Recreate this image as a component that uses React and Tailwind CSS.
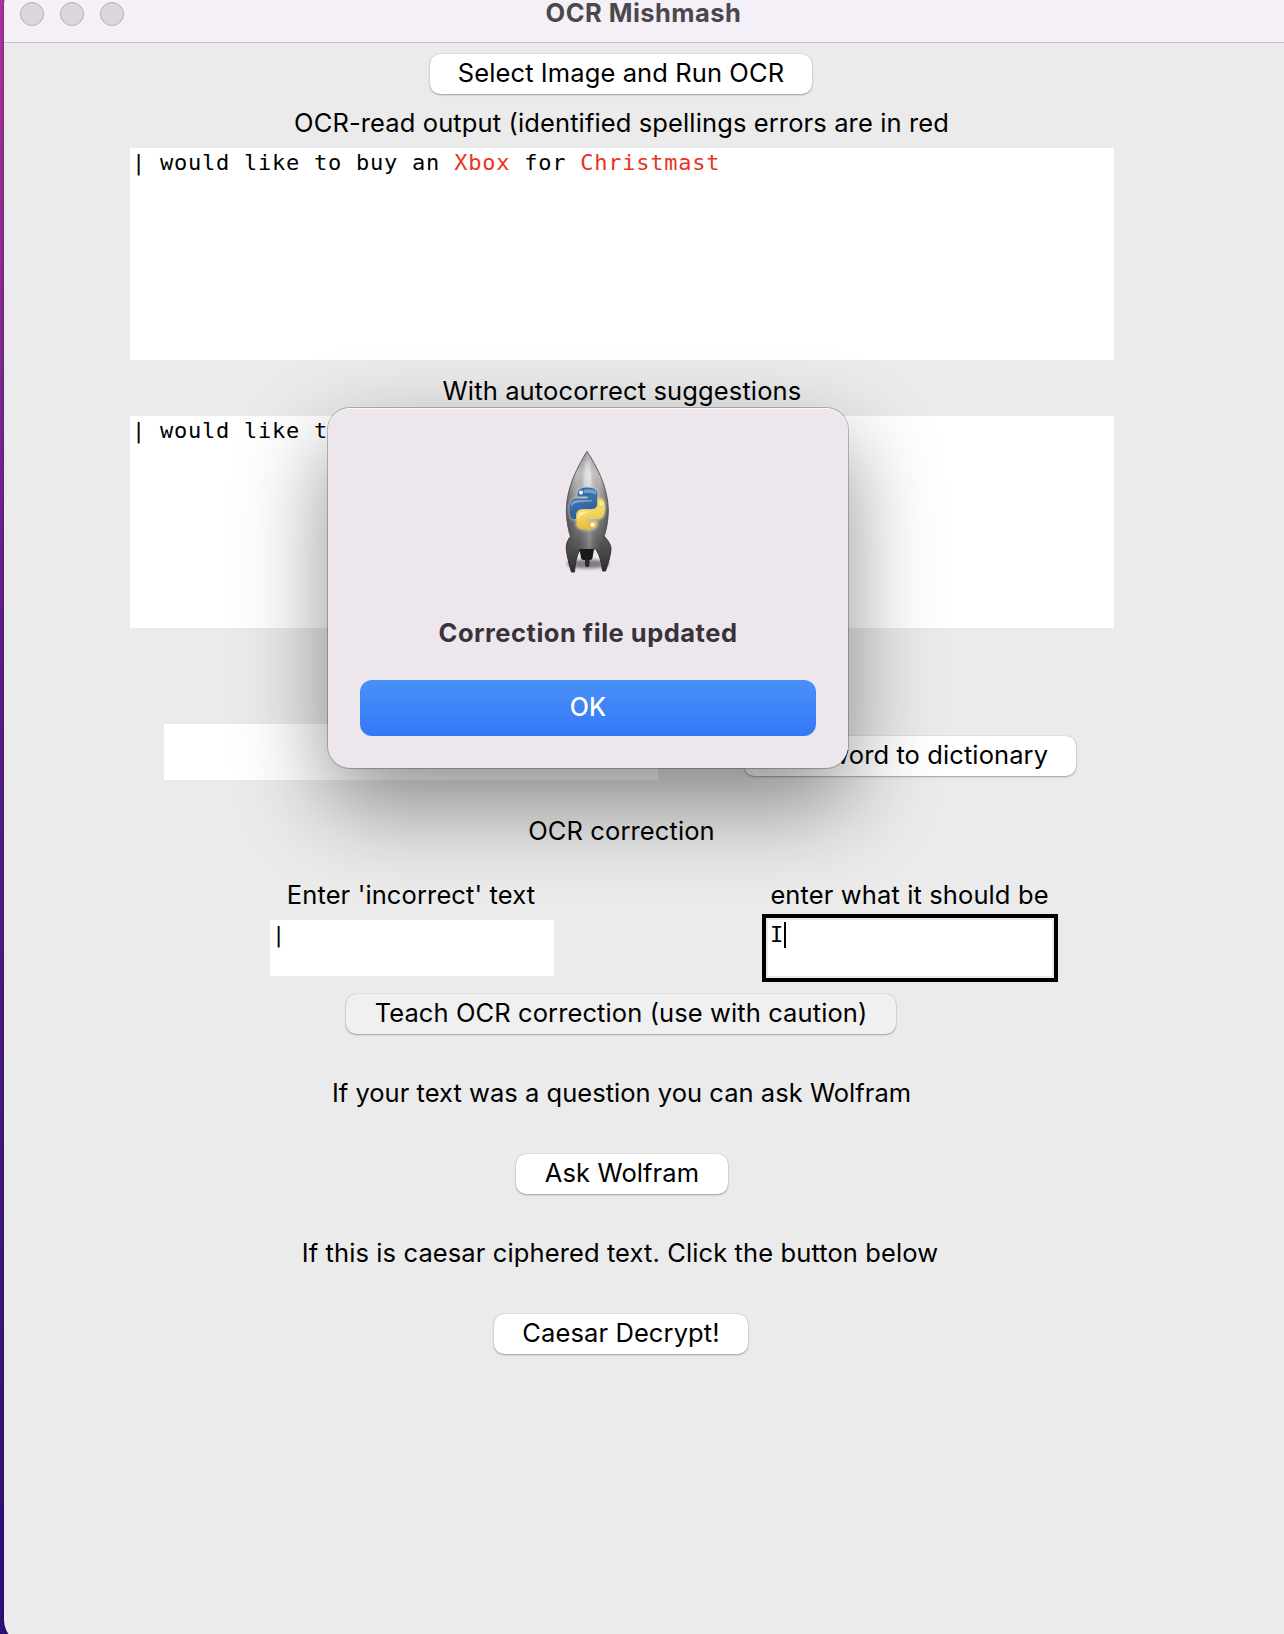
function Label({ children, className = "" }) {
  return (
    <p className={"whitespace-nowrap text-center text-[25.5px] leading-8 text-black " + className}>
      {children}
    </p>
  );
}

function PushButton({ children, className = "bg-white" }) {
  return (
    <button
      type="button"
      className={
        "flex h-10 shrink-0 items-center justify-center whitespace-nowrap rounded-[10px] pb-[2px] text-[25.5px] leading-8 tracking-[0.1px] text-black shadow-[0_0_1px_rgba(0,0,0,0.3),0_1px_2px_rgba(0,0,0,0.3)] " +
        className
      }
    >
      {children}
    </button>
  );
}

function TextBox({ children, className = "" }) {
  return (
    <div
      className={
        "whitespace-pre bg-white pl-[2px] pt-[1px] font-['DejaVu_Sans_Mono',monospace] text-[22px] leading-7 tracking-[0.76px] text-black " +
        className
      }
    >
      {children}
    </div>
  );
}

function TrafficLights() {
  return (
    <div className="absolute left-[16px] top-[2px] flex gap-4">
      {[0, 1, 2].map((i) => (
        <span key={i} className="size-6 rounded-full border border-[#b7b1b9] bg-[#dbd5dd]" />
      ))}
    </div>
  );
}

function RocketIcon() {
  return (
    <svg width="100" height="160" viewBox="0 0 100 160" aria-hidden="true">
      <defs>
        <linearGradient id="hull" x1="0" y1="0" x2="0" y2="1">
          <stop offset="0" stopColor="#8e8e8e" />
          <stop offset="0.22" stopColor="#c6c6c6" />
          <stop offset="0.42" stopColor="#acacac" />
          <stop offset="0.7" stopColor="#7c7c7c" />
          <stop offset="1" stopColor="#505050" />
        </linearGradient>
        <linearGradient id="hullSides" x1="0" y1="0" x2="1" y2="0">
          <stop offset="0" stopColor="#222" stopOpacity="0.5" />
          <stop offset="0.25" stopColor="#555" stopOpacity="0.08" />
          <stop offset="0.55" stopColor="#fff" stopOpacity="0.28" />
          <stop offset="0.8" stopColor="#555" stopOpacity="0.08" />
          <stop offset="1" stopColor="#222" stopOpacity="0.5" />
        </linearGradient>
        <linearGradient id="blueSnake" x1="0" y1="0" x2="0.3" y2="1">
          <stop offset="0" stopColor="#2f6dab" />
          <stop offset="0.5" stopColor="#3a70a8" />
          <stop offset="1" stopColor="#2b5d95" />
        </linearGradient>
        <linearGradient id="yellowSnake" x1="0" y1="0" x2="0.2" y2="1">
          <stop offset="0" stopColor="#f3d14e" />
          <stop offset="0.5" stopColor="#f5d862" />
          <stop offset="1" stopColor="#e8bd3c" />
        </linearGradient>
        <linearGradient id="fin" x1="0" y1="0" x2="0" y2="1">
          <stop offset="0" stopColor="#5a5a5a" />
          <stop offset="0.5" stopColor="#474747" />
          <stop offset="1" stopColor="#2c2c2c" />
        </linearGradient>
        <filter id="soft" x="-30%" y="-100%" width="160%" height="300%">
          <feGaussianBlur stdDeviation="1.7" />
        </filter>
        <filter id="glow" x="-20%" y="-20%" width="140%" height="140%">
          <feGaussianBlur stdDeviation="1" />
        </filter>
      </defs>
      <ellipse cx="48" cy="134" rx="21" ry="4.5" fill="#4a454a" opacity="0.65" filter="url(#soft)" />
      <path d="M31 106C27.500 110 26 114.500 26.300 118.500C27 126 29 134 31.500 142H34.500C35 134 36.500 125.500 40 119.500Z" fill="url(#fin)" stroke="#2d2d2d" strokeWidth="1" />
      <path d="M64 106C67.500 110 71 114.500 71 118.500C70.500 126 68 134 65.500 141H62.500C61.500 133 60 125 56 119.500Z" fill="url(#fin)" stroke="#2d2d2d" strokeWidth="1" />
      <path d="M47 21.300C38 36 26.500 57 26.300 80C26.400 95 30 108 35 118.500Q47 121 59 118.500C64.500 108 68.300 95 68.300 80C68 57 56.500 36 47 21.300Z" fill="url(#hull)" />
      <path d="M47 21.300C38 36 26.500 57 26.300 80C26.400 95 30 108 35 118.500Q47 121 59 118.500C64.500 108 68.300 95 68.300 80C68 57 56.500 36 47 21.300Z" fill="url(#hullSides)" stroke="#555" strokeWidth="0.9" />
      <path d="M47 29C44 37 43 47 43.500 57H51.500C52 47 50 37 47 29Z" fill="#fff" opacity="0.4" filter="url(#glow)" />
      <path d="M39.500 119H54L52.500 128Q52 130 50 130H43.500Q41.500 130 41 128Z" fill="#191919" />
      <path d="M45 129.500H49.500V135.500Q47.200 139 45 135.500Z" fill="#2a2a2a" />
      <g stroke="#d0d0d0" strokeOpacity="0.6" strokeWidth="2.400" filter="url(#glow)" fill="none">
        <path d="M37.500 63.500Q38 58 46 57.500Q57 57 57.300 63.500V74Q57 79 51.500 79H42.500Q36.500 79.300 36 85V89H33Q29.500 88 29.500 78Q29.800 69 36 68.500H47.500V66.500H37.500Z" />
        <path d="M57.500 68.500H61Q65 69.500 65 78Q65 88 58.500 89H47V91.500H57V95Q56.500 99.500 47 99.700Q36.500 99.500 36.500 94V84.500Q37 79.500 42.500 79.500H51.500Q57.500 79 57.500 74Z" />
      </g>
      <path d="M37.500 63.500Q38 58 46 57.500Q57 57 57.300 63.500V74Q57 79 51.500 79H42.500Q36.500 79.300 36 85V89H33Q29.500 88 29.500 78Q29.800 69 36 68.500H47.500V66.500H37.500Z" fill="url(#blueSnake)" />
      <path d="M57.500 68.500H61Q65 69.500 65 78Q65 88 58.500 89H47V91.500H57V95Q56.500 99.500 47 99.700Q36.500 99.500 36.500 94V84.500Q37 79.500 42.500 79.500H51.500Q57.500 79 57.500 74Z" fill="url(#yellowSnake)" />
      <path d="M43.500 60Q51 58 56 61V64.500Q50 62 44 63Z" fill="#8fb8de" opacity="0.65" />
      <path d="M31 73.500Q33 70 37 70H52V71.500Q41 72 36 73Q32.500 74 31 77Z" fill="#9cc0e2" opacity="0.6" />
      <path d="M59.500 70.500Q63 70.500 63.500 75Q61 77 59.500 75Z" fill="#fff3b8" opacity="0.75" />
      <path d="M38.500 85Q39 81.500 43 81.500H50Q45 83 43 84.500Q40 86 38.500 89Z" fill="#fff3b8" opacity="0.75" />
      <circle cx="41" cy="62.500" r="2" fill="#fff" />
      <circle cx="52.600" cy="94.800" r="2" fill="#fff" />
    </svg>
  );
}

function AlertDialog() {
  return (
    <div
      role="alertdialog"
      className="absolute left-[328px] top-[408px] flex h-[360px] w-[520px] flex-col items-center rounded-[22px] bg-[#ede6ec] pt-[22px] shadow-[0_0_0_1px_rgba(0,0,0,0.24),inset_0_1px_1px_rgba(255,255,255,0.7),0_36px_90px_rgba(0,0,0,0.44)]"
    >
      <div className="ml-[4px]">
        <RocketIcon />
      </div>
      <p className="mt-[27px] whitespace-nowrap text-[25.5px] font-bold leading-8 tracking-[0.5px] text-[#3a323a]">
        Correction file updated
      </p>
      <button
        type="button"
        className="mt-[31px] flex h-14 w-[456px] items-center justify-center rounded-xl bg-linear-to-b from-[#4a90f8] to-[#3478f6] pb-[3px] text-[25px] font-medium leading-8 text-white"
      >
        OK
      </button>
    </div>
  );
}

export default function App() {
  return (
    <div className="relative h-[1634px] w-[1284px] overflow-hidden bg-linear-to-b from-[#a8329b] via-[#5c1d82] via-40% to-[#2b0f74] pl-1 font-['Inter',sans-serif]">
      <div className="-mt-[18px] flex h-[1662px] w-[1300px] flex-col rounded-[24px] bg-[#ebebeb] shadow-[0_0_2px_rgba(0,0,0,0.6)]">
        <header className="h-[61px] shrink-0 rounded-tl-[24px] border-b border-[#c7c1c8] bg-[#f5eff7] pt-[18px]">
          <div className="relative h-[42px] w-[1280px] pt-[1px]">
            <TrafficLights />
            <h1 className="w-[1279px] whitespace-nowrap text-center text-[25.5px] font-bold leading-6 tracking-[0.45px] text-[#4b484c]">
              OCR Mishmash
            </h1>
          </div>
        </header>

        <main className="flex w-[1236px] flex-col items-center pt-[11px]">
          <PushButton className="mr-[2px] w-[382px] bg-white">Select Image and Run OCR</PushButton>

          <Label className="mr-[1px] mt-[13px] tracking-[0.12px]">
            OCR-read output (identified spellings errors are in red
          </Label>
          <TextBox className="mt-[9px] h-[212px] w-[984px]">
            | would like to buy an <span className="text-[#eb3223]">Xbox</span> for{" "}
            <span className="text-[#eb3223]">Christmast</span>
          </TextBox>

          <Label className="mt-[15px] tracking-[0.13px]">With autocorrect suggestions</Label>
          <TextBox className="mt-[9px] h-[212px] w-[984px]">| would like to</TextBox>

          <div className="mt-[96px] flex h-14 w-full items-start pl-[160px]">
            <TextBox className="h-14 w-[494px]" />
            <PushButton className="ml-[86px] mt-3 w-[332px] bg-white">Add word to dictionary</PushButton>
          </div>

          <Label className="mr-[1px] mt-[35px] tracking-[0.1px]">OCR correction</Label>

          <div className="mt-8 flex w-full gap-[208px] pl-[266px]">
            <div className="flex w-[284px] flex-col items-center">
              <Label className="mr-[2px] tracking-[0.12px]">Enter 'incorrect' text</Label>
              <TextBox className="mt-[9px] h-14 w-[284px]">|</TextBox>
            </div>
            <div className="flex w-[296px] flex-col items-center">
              <Label className="mr-[1px] tracking-[0.12px]">enter what it should be</Label>
              <div className="mt-[3px] h-[68px] w-[296px] border-4 border-black bg-[#ebebeb] p-[2px]">
                <TextBox className="flex h-14 items-start">
                  <span>I</span>
                  <span className="mt-[1px] h-[26px] w-[2px] bg-black" />
                </TextBox>
              </div>
            </div>
          </div>

          <PushButton className="mr-[2px] mt-3 w-[550px] bg-[#f0f0f0]">
            Teach OCR correction (use with caution)
          </PushButton>

          <Label className="mr-[1px] mt-[43px] tracking-[0.03px]">
            If your text was a question you can ask Wolfram
          </Label>
          <PushButton className="mt-[45px] w-[212px] bg-white">Ask Wolfram</PushButton>

          <Label className="mr-[4px] mt-[43px] tracking-[0.11px]">
            If this is caesar ciphered text. Click the button below
          </Label>
          <PushButton className="mr-[2px] mt-[45px] w-[254px] bg-white">Caesar Decrypt!</PushButton>
        </main>
      </div>

      <AlertDialog />
    </div>
  );
}
